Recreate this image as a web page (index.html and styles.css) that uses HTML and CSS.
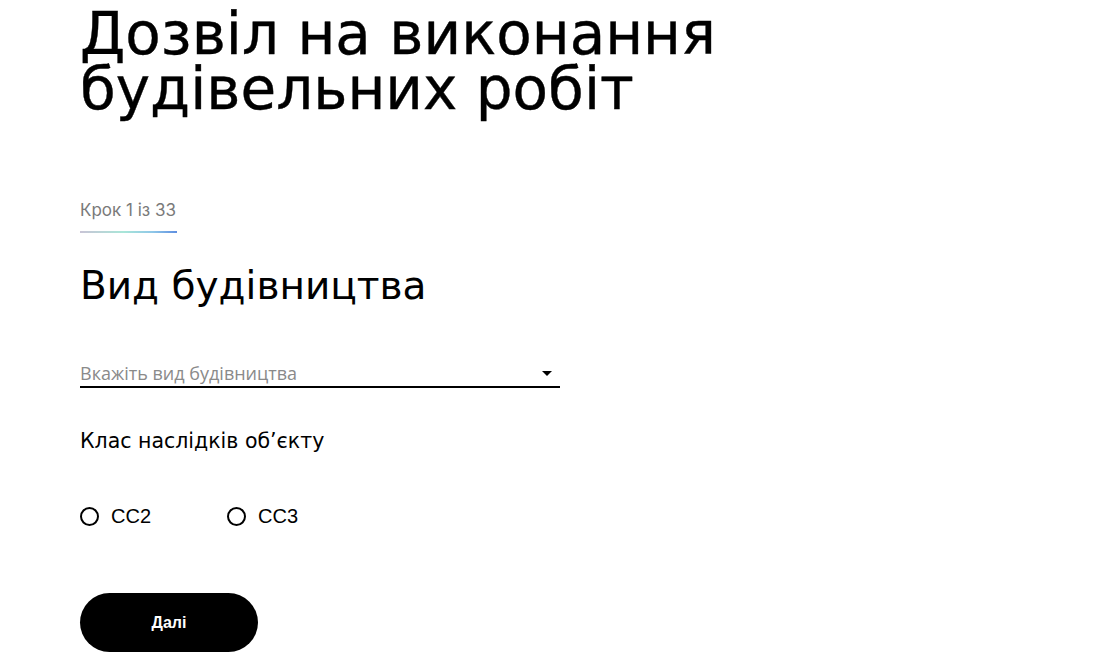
FILE: index.html
```html
<!DOCTYPE html>
<html lang="uk">
<head>
<meta charset="utf-8">
<title>Дозвіл на виконання будівельних робіт</title>
<link rel="stylesheet" href="styles.css">
</head>
<body>
<main class="page">
  <h1 class="title">Дозвіл на виконання будівельних робіт</h1>
  <div class="step">
    <span class="step-text">Крок 1 із 33</span>
    <div class="step-bar"></div>
  </div>
  <h2 class="section-title">Вид будівництва</h2>
  <div class="select">
    <span class="select-placeholder">Вкажіть вид будівництва</span>
    <span class="select-arrow"></span>
  </div>
  <h3 class="field-title">Клас наслідків об’єкту</h3>
  <div class="radios">
    <label class="radio"><span class="radio-circle"></span><span class="radio-label">СС2</span></label>
    <label class="radio"><span class="radio-circle"></span><span class="radio-label">СС3</span></label>
  </div>
  <button class="btn" type="button">Далі</button>
</main>
</body>
</html>
```
FILE: styles.css
```css
html, body {
  margin: 0;
  padding: 0;
  background: #fff;
}
body {
  font-family: "DejaVu Sans", "Liberation Sans", sans-serif;
  color: #000;
}
.page {
  padding: 7px 0 0 80px;
  display: flex;
  flex-direction: column;
  align-items: flex-start;
}
.title {
  margin: 0;
  font-size: 58px;
  line-height: 55px;
  font-weight: 400;
  width: 700px;
  -webkit-text-stroke: 0.4px #000;
}
.step {
  margin-top: 83px;
  display: flex;
  flex-direction: column;
  width: 97px;
}
.step-text {
  font-family: "Inter", sans-serif;
  font-size: 17px;
  line-height: 20px;
  color: #7a7a7a;
  white-space: nowrap;
}
.step-bar {
  margin-top: 11px;
  height: 2px;
  width: 97px;
  background: linear-gradient(90deg, #c9c4d6 0%, #a9e6d8 45%, #8fc7e8 75%, #5e8ee0 100%);
}
.section-title {
  margin: 31px 0 0;
  font-size: 39px;
  line-height: 44px;
  font-weight: 400;
}
.select {
  margin-top: 54px;
  width: 480px;
  display: flex;
  align-items: center;
  justify-content: space-between;
  border-bottom: 2px solid #000;
  padding-bottom: 2px;
}
.select-placeholder {
  font-family: "Open Sans", sans-serif;
  font-size: 18px;
  line-height: 22px;
  color: #8a8a8a;
}
.select-arrow {
  width: 0;
  height: 0;
  border-left: 5px solid transparent;
  border-right: 5px solid transparent;
  border-top: 5px solid #000;
  margin-right: 8px;
}
.field-title {
  margin: 40px 0 0;
  font-size: 20.5px;
  line-height: 26px;
  font-weight: 400;
}
.radios {
  margin-top: 51px;
  display: flex;
  gap: 76px;
}
.radio {
  display: flex;
  align-items: center;
  gap: 12px;
}
.radio-circle {
  width: 15px;
  height: 15px;
  border: 2px solid #000;
  border-radius: 50%;
}
.radio-label {
  font-family: "Liberation Sans", Arial, sans-serif;
  font-size: 20px;
  line-height: 22px;
}
.btn {
  margin-top: 66px;
  width: 178px;
  height: 59px;
  border: none;
  border-radius: 30px;
  background: #000;
  color: #fff;
  font-family: "Liberation Sans", Arial, sans-serif;
  font-size: 16px;
  font-weight: 700;
  cursor: pointer;
}
```
